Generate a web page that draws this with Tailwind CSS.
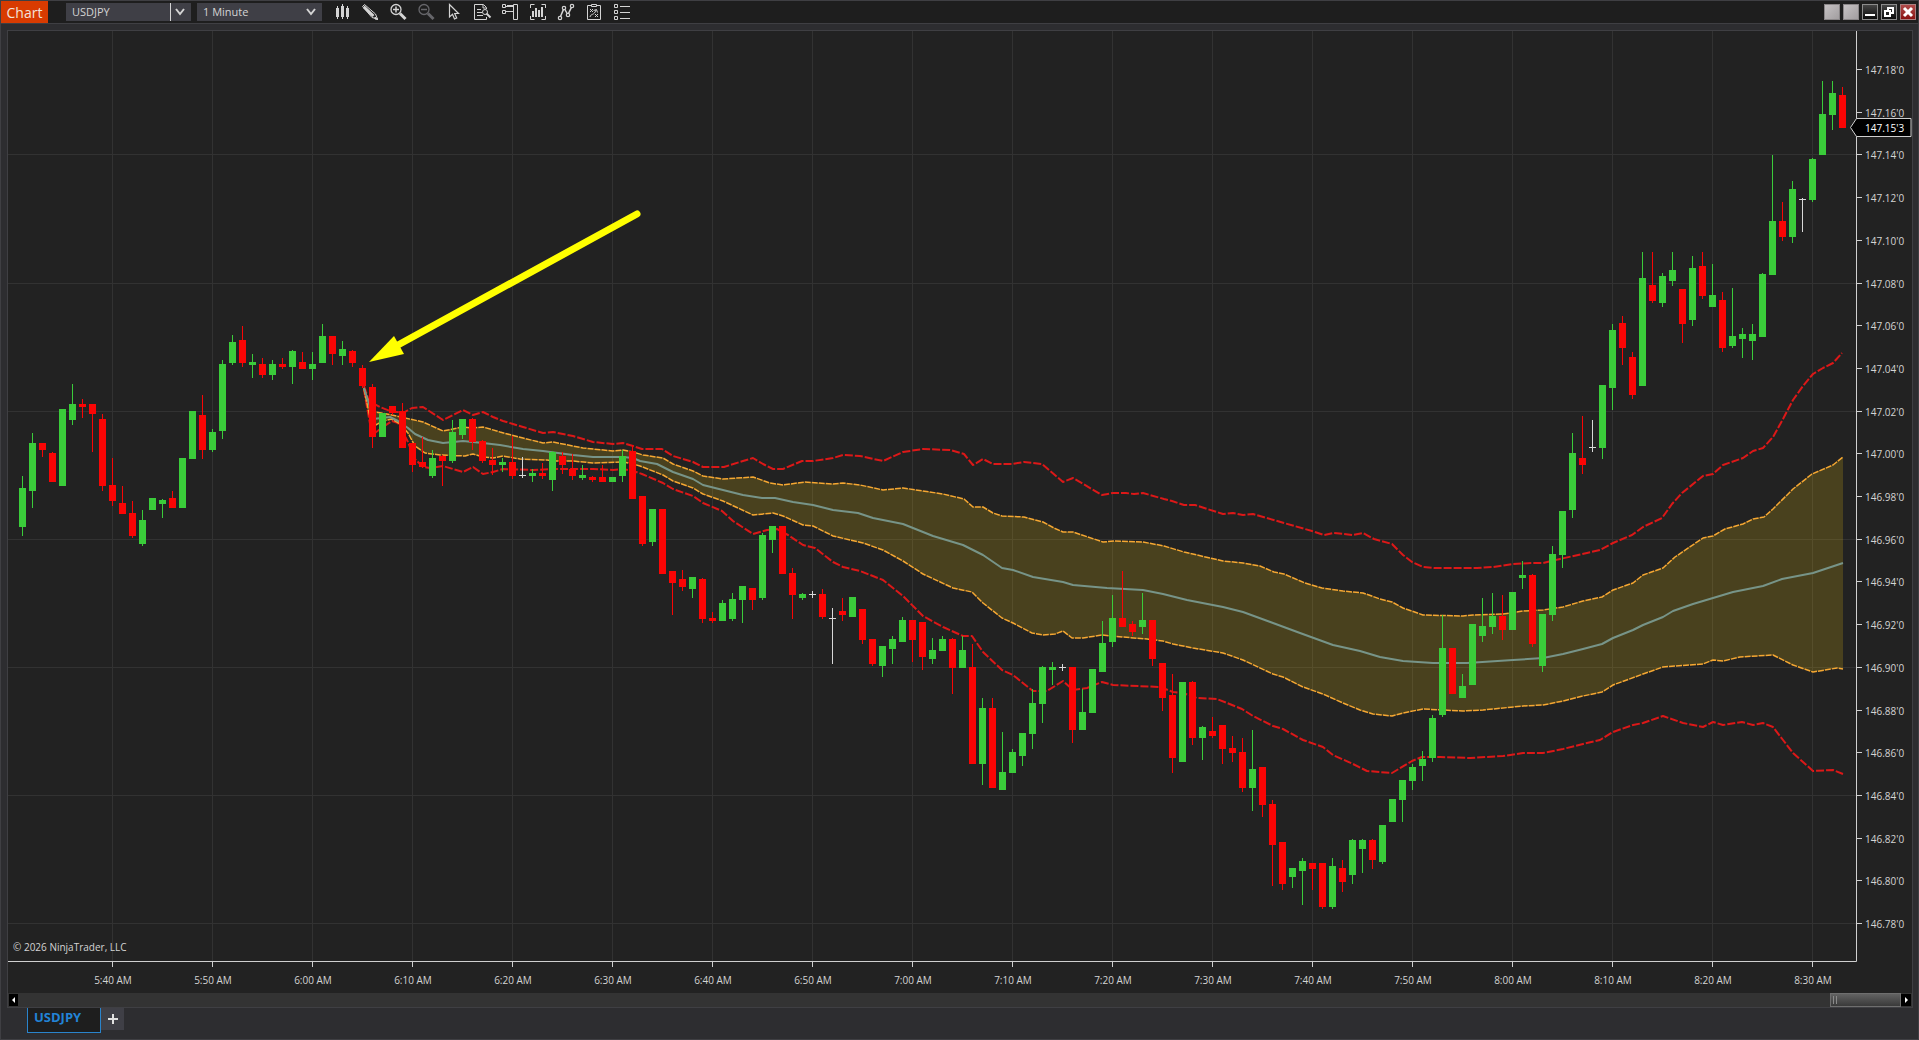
<!DOCTYPE html>
<html lang="en">

<head>
  <meta charset="UTF-8" />
  <meta name="viewport" content="width=device-width, initial-scale=1" />
  <title>Chart - USDJPY</title>
  <script src="https://cdn.jsdelivr.net/npm/@tailwindcss/browser@4"></script>
</head>

<body class="flex h-screen flex-col overflow-hidden border border-[#3f3f43] bg-[#2d2d30] font-['Open_Sans',sans-serif] text-[#d4d4d4]">

  <!-- Title bar -->
  <header class="flex h-[23px] shrink-0 items-center border-b border-[#3f3f43] bg-[#1e1e1e] pr-[2px]">
    <h1 class="flex h-full w-[47px] items-center justify-center bg-[#d83b01] text-[14px] text-[#f3e3dc]">Chart</h1>

    <div class="relative ml-[18px] h-[18px] w-[125px]">
      <select aria-label="Instrument" class="block h-full w-full appearance-none bg-[#3f3f46] pl-[6px] text-[11px] leading-[18px] outline-none">
        <option>USDJPY</option>
      </select>
      <svg class="pointer-events-none absolute right-0 top-0 h-[18px] w-[22px]" viewBox="0 0 22 18" fill="none" stroke="#d4d4d4">
        <path d="M1.5 0v18" />
        <path d="M7 6l4 5l4-5" stroke-width="2" />
      </svg>
    </div>

    <div class="relative ml-[6px] h-[18px] w-[125px]">
      <select aria-label="Interval" class="block h-full w-full appearance-none bg-[#3f3f46] pl-[6px] text-[11px] leading-[18px] outline-none">
        <option>1 Minute</option>
      </select>
      <svg class="pointer-events-none absolute right-0 top-0 h-[18px] w-[22px]" viewBox="0 0 22 18" fill="none" stroke="#d4d4d4">
        <path d="M7 6l4 5l4-5" stroke-width="2" />
      </svg>
    </div>

    <nav class="ml-[6px] flex" aria-label="Chart tools">
      <button class="h-5 w-7" aria-label="Bar type">
        <svg class="h-5 w-7" viewBox="0 0 28 20" fill="#d4d4d4">
          <path d="M8 6h3v9H8zM9 4h1v13H9zM13 4h3v11h-3zM14 2h1v15h-1zM18 6h3v9h-3zM19 4h1v13h-1z" />
        </svg>
      </button>
      <button class="h-5 w-7" aria-label="Drawing tools">
        <svg class="h-5 w-7" viewBox="0 0 28 20" fill="none" stroke="#d4d4d4">
          <path d="M6.500 4.500l2-2l11 9.500l2 5l-5.500-1.500z" />
          <path d="M8 4l10 9.500M7.500 5.500l9.500 9" stroke-width="1.500" />
          <path d="M19 15l3 2.500l-3-.5z" fill="#d4d4d4" />
        </svg>
      </button>
      <button class="h-5 w-7" aria-label="Zoom in">
        <svg class="h-5 w-7" viewBox="0 0 28 20" fill="none" stroke="#d4d4d4">
          <circle cx="12" cy="7.500" r="5" stroke-width="1.300" />
          <path d="M12 4.500v6M9 7.500h6" stroke-width="1.500" />
          <path d="M16 11.500l5.500 5.500" stroke-width="3" />
        </svg>
      </button>
      <button class="h-5 w-7" aria-label="Zoom out">
        <svg class="h-5 w-7" viewBox="0 0 28 20" fill="none" stroke="#66666a">
          <circle cx="12" cy="7.500" r="5" stroke-width="1.300" />
          <path d="M9 7.500h6" stroke-width="1.500" />
          <path d="M16 11.500l5.500 5.500" stroke-width="3" />
        </svg>
      </button>
      <button class="h-5 w-7" aria-label="Cursor">
        <svg class="h-5 w-7" viewBox="0 0 28 20" fill="none" stroke="#d4d4d4" stroke-width="1.200">
          <path d="M9.500 2.500v12.500l3-2.700l2 4.700l2.200-1l-2-4.500h3.800z" />
        </svg>
      </button>
      <button class="h-5 w-7" aria-label="Data box">
        <svg class="h-5 w-7" viewBox="0 0 28 20" fill="none" stroke="#d4d4d4">
          <path d="M18.500 7V5.500l-3-3h-9v15h12V15M15 3v3h3" />
          <path d="M9 7.500h4M9 10.500h5M9 13.500h6" />
          <circle cx="17" cy="10" r="2.500" />
          <path d="M18.500 11.500l4 4" stroke-width="2" />
        </svg>
      </button>
      <button class="h-5 w-7" aria-label="Chart trader">
        <svg class="h-5 w-7" viewBox="0 0 28 20" fill="none" stroke="#d4d4d4">
          <path d="M17.500 2.500h4v15h-4zM6.500 2.500h3v3h-3zM6.500 8.500h3v3h-3z" />
          <path d="M10 4.500h7M10 9.500h7M11 3.500h6" />
        </svg>
      </button>
      <button class="h-5 w-7" aria-label="Data series">
        <svg class="h-5 w-7" viewBox="0 0 28 20" fill="none" stroke="#d4d4d4">
          <path d="M6.500 6V2.500h4M17.500 2.500h4V6M21.500 14v3.500h-4M10.500 17.500h-4V14" />
          <path d="M9 9v6M12 6v9M15 8v7M18 5v10" stroke-width="2" />
        </svg>
      </button>
      <button class="h-5 w-7" aria-label="Indicators">
        <svg class="h-5 w-7" viewBox="0 0 28 20" fill="none" stroke="#d4d4d4" stroke-width="1.200">
          <circle cx="8" cy="16" r="1.700" />
          <circle cx="12" cy="6" r="1.700" />
          <circle cx="16" cy="13" r="1.700" />
          <circle cx="20" cy="4" r="1.700" />
          <path d="M8.600 14.300l2.800-6.700M12.900 7.500l2.200 4M16.600 11.300l2.700-5.700" stroke-width="1.500" />
        </svg>
      </button>
      <button class="h-5 w-7" aria-label="Strategies">
        <svg class="h-5 w-7" viewBox="0 0 28 20" fill="none" stroke="#d4d4d4">
          <path d="M11 3.500H7.500v14h13v-14H17M11.500 2.500h5v2h-5z" />
          <path d="M10 7l3 3M13 7l-3 3M15 12l3 3M18 12l-3 3M10 15c1-4 4-1 6-7M13.500 8.500l3-1l1 3" />
        </svg>
      </button>
      <button class="h-5 w-7" aria-label="Properties">
        <svg class="h-5 w-7" viewBox="0 0 28 20" fill="none" stroke="#d4d4d4">
          <path d="M6.500 2.500h3v3h-3zM6.500 8.500h3v3h-3zM6.500 14.500h3v3h-3zM12 4.500h10M12 10.500h10M12 16.500h10" />
        </svg>
      </button>
    </nav>

    <div class="ml-auto flex gap-[3px]">
      <button aria-label="Instrument link" class="size-4 border border-[#8a8688] bg-linear-to-br from-[#c6c2c4] to-[#a29ea0]"></button>
      <button aria-label="Interval link" class="size-4 border border-[#8a8688] bg-linear-to-br from-[#c6c2c4] to-[#a29ea0]"></button>
      <button aria-label="Minimize" class="size-4 border border-[#8c8c8c] bg-linear-to-b from-[#454545] to-[#0c0c0c]">
        <svg class="size-[14px]" viewBox="0 0 14 14" fill="#fff"><path d="M2 9h10v2H2z" /></svg>
      </button>
      <button aria-label="Restore" class="size-4 border border-[#8c8c8c] bg-linear-to-b from-[#454545] to-[#0c0c0c]">
        <svg class="size-[14px]" viewBox="0 0 14 14" fill="none" stroke="#fff" stroke-width="2"><path d="M3 6h5v5H3zM6 5V3h5v5H9" /></svg>
      </button>
      <button aria-label="Close" class="size-4 border border-[#a88080] bg-linear-to-b from-[#b04a4a] to-[#8a1010]">
        <svg class="size-[14px]" viewBox="0 0 14 14" fill="none" stroke="#fff" stroke-width="3"><path d="M3 3l8 8M11 3l-8 8" /></svg>
      </button>
    </div>
  </header>

  <!-- Chart panel -->
  <main class="ml-[6px] mr-[5px] mt-[6px] flex min-h-0 flex-1 flex-col border border-[#3f3f43] bg-[#222222]">
    <svg id="chart" class="min-h-0 w-full flex-1" viewBox="8 31 1904 962" role="img" aria-label="USDJPY 1 minute candlestick chart">
      <g id="grid" stroke="#323232"></g>
      <g id="bands" fill="none" stroke-linejoin="round"></g>
      <g id="candles"></g>
      <g id="axes" fill="none" stroke="#d0d0d0">
        <path d="M1856.500 31V961.500H8" />
      </g>
      <g id="labels" class="text-[10px]" fill="#d4d4d4"></g>
      <text x="13" y="951" class="text-[10px]" fill="#d4d4d4">© 2026 NinjaTrader, LLC</text>

      <!-- last price marker -->
      <path d="M1850.500 127.500L1856.500 118.500H1911V136.500H1856.500Z" fill="#000" stroke="#d0d0d0" />
      <text x="1865" y="132" class="text-[10px]" fill="#fff">147.15'3</text>

      <!-- arrow annotation -->
      <g fill="#ffff00" stroke="#ffff00">
        <path d="M637 214L398 345" stroke-width="7" stroke-linecap="round" />
        <path d="M369 362L394 336L404 354Z" stroke="none" />
      </g>
    </svg>

    <!-- Time scroll bar -->
    <div class="flex h-[14px] shrink-0 items-center bg-[#333333] px-px">
      <button aria-label="Scroll left" class="flex h-3 w-[9px] items-center justify-center bg-black">
        <svg class="h-[6px] w-[3px]" viewBox="0 0 3 6" fill="#fff"><path d="M3 0v6L0 3z" /></svg>
      </button>
      <div class="ml-auto flex h-[14px] w-[71px] items-center gap-[2px] border border-[#6e6e6e] bg-linear-to-b from-[#626262] to-[#3a3a3a] pl-[2px]">
        <span class="h-2 w-px bg-[#8a8a8a]"></span>
        <span class="h-2 w-px bg-[#8a8a8a]"></span>
      </div>
      <button aria-label="Scroll right" class="flex h-3 w-[10px] items-center justify-center bg-black">
        <svg class="h-[6px] w-[3px]" viewBox="0 0 3 6" fill="#fff"><path d="M0 0v6L3 3z" /></svg>
      </button>
    </div>
  </main>

  <!-- Tabs -->
  <footer class="flex h-[31px] shrink-0 items-start pl-[26px]">
    <button class="h-[25px] w-[74px] border border-t-0 border-[#2a84cc] bg-[#1e1e1e] pb-[7px] pl-[6px] text-left text-[13px] leading-[18px] font-bold text-[#2283d6]">USDJPY</button>
    <button aria-label="Add tab" class="flex h-[22px] w-[23px] items-center justify-center bg-[#3f3f46]">
      <svg class="size-[10px]" viewBox="0 0 10 10" fill="#e0e0e0"><path d="M4 0h2v4h4v2H6v4H4V6H0V4h4z" /></svg>
    </button>
  </footer>

  <script>
    const svgNS = "http://www.w3.org/2000/svg";

    function add(parentId, name, attrs, text) {
      const el = document.createElementNS(svgNS, name);
      for (const key in attrs) el.setAttribute(key, attrs[key]);
      if (text) el.textContent = text;
      document.getElementById(parentId).appendChild(el);
    }

    // One bar per minute: colour, high, body top, body bottom, low (chart units)
    // g = up, r = down, w = unchanged
    const bars = `g476,488,527,536 g433,443,491,508 r443,443,450,457 r452,453,482,482 g409,409,486,486 g384,404,420,425
      r399,404,407,418 r404,404,414,452 r414,419,486,491 r458,485,501,506 r486,503,514,514 r501,513,536,538 g510,520,544,546
      g498,498,510,510 g499,500,504,518 r491,498,508,508 g458,458,508,508 g411,411,459,459 r395,415,450,459 g429,432,450,452
      g360,364,431,439 g335,342,363,365 r326,340,363,367 g354,362,365,378 r358,364,375,378 g360,364,375,380 r358,364,367,369
      g350,351,367,384 r352,362,369,369 g352,364,369,380 g324,336,363,363 r336,336,354,365 g341,349,356,365 r350,351,363,367
      r365,368,386,388 r384,387,437,448 g413,413,437,437 r406,406,413,415 r403,411,448,448 r443,443,465,472 r437,462,467,468
      g450,458,476,478 r455,456,461,486 g420,432,461,463 g419,419,435,439 r418,419,442,450 r440,441,461,463 r448,460,465,475
      g458,462,465,472 r436,462,476,479 w457,475,476,478 g469,473,476,482 r463,473,476,479 g451,452,480,491 r452,456,465,474
      r454,469,476,480 g465,475,478,480 r476,477,480,482 r465,477,482,482 g477,477,482,482 g450,456,476,482 r445,451,499,499
      r496,496,544,546 g509,509,542,546 r509,509,574,574 r571,571,583,615 r570,579,587,591 g577,577,589,598 r578,579,619,623
      r612,618,621,623 g600,603,621,621 g593,599,619,621 g586,586,600,623 r588,588,600,610 g533,535,598,600 g526,526,540,553
      r526,526,574,574 r568,573,595,619 g593,594,598,600 w591,594,595,598 r589,594,617,619 w608,618,619,664 r598,611,615,621
      g597,597,617,617 r609,609,640,644 r639,639,664,666 g646,646,666,677 g636,639,649,664 g617,620,642,642 r620,620,640,662
      r622,622,657,670 g638,650,659,664 g636,639,651,651 r638,639,668,694 g636,650,668,668 r644,667,764,764 g698,708,764,785
      r698,708,788,788 g732,772,790,790 g749,752,773,773 g733,733,756,766 g689,703,734,749 g666,667,704,723 g662,667,670,685
      w664,667,668,671 r667,667,730,743 g689,712,730,730 g669,669,713,713 g621,643,672,672 g595,618,642,647 r571,618,627,627
      r621,624,632,636 g593,620,627,634 r620,620,659,666 r663,663,698,711 r674,695,758,773 g682,682,762,762 r681,682,738,745
      g726,727,738,760 r717,731,736,738 r725,725,749,764 r736,748,753,762 r738,752,788,792 g730,769,788,811 r767,767,805,817
      r800,804,845,886 r842,842,884,890 g868,868,877,888 g858,861,871,905 r863,863,869,890 r863,863,907,909 g858,866,907,909
      r860,868,882,892 g839,840,875,884 g839,840,849,873 r839,840,860,869 g825,825,862,864 g799,799,822,822 g780,780,800,822
      g764,767,781,790 g751,759,766,781 g715,718,758,762 g615,648,715,717 r648,648,694,694 g674,686,698,698 g624,624,685,685
      g598,626,636,642 g593,616,627,634 r595,616,630,640 g592,592,630,630 g561,575,578,589 r574,575,644,647 g614,614,666,672
      g546,554,615,621 g511,511,555,568 g433,453,510,518 r416,458,465,474 w420,447,448,452 g385,385,448,459 g324,330,388,410
      r316,323,348,365 r352,357,395,399 g252,278,386,386 r252,285,301,303 g273,276,303,307 g252,270,281,286 r289,289,324,343
      g256,268,320,326 r252,266,296,299 g264,295,307,307 r292,300,348,352 g288,336,346,348 g328,334,339,358 g324,334,341,360
      g273,274,337,337 g155,221,275,275 r202,221,237,241 g181,189,237,243 w198,199,200,232 g158,159,200,202 g81,114,155,155
      g81,93,115,130 r87,95,128,128`;
    const barColors = { g: "#3acc3a", r: "#fa0505", w: "#d8d8d8" };

    bars.split(/\s+/).forEach((bar, i) => {
      const fill = barColors[bar[0]];
      const [high, top, bottom, low] = bar.slice(1).split(",").map(Number);
      const x = 22 + i * 10;
      add("candles", "rect", { x, y: high, width: 1, height: low - high, fill });
      add("candles", "rect", { x: x - 3, y: top, width: 7, height: bottom - top, fill });
    });

    // Anchored VWAP and its deviation bands
    const upper2 = "364,386 369,401 380,407 390,411 403,413 412,408 423,407 443,420 463,410 473,415 483,412 493,417 503,421 513,424 523,427 543,433 553,432 573,436 593,442 613,444 623,443 633,446 642,449 662,449 673,456 693,462 703,467 724,467 743,461 753,458 763,464 773,469 783,469 802,461 813,461 833,458 843,455 860,456 883,461 903,452 923,449 950,450 964,454 973,465 983,459 993,464 1012,464 1024,462 1042,464 1063,482 1073,478 1102,495 1113,493 1126,493 1134,494 1143,493 1164,499 1172,501 1184,505 1195,505 1223,514 1233,513 1243,515 1253,514 1284,523 1312,531 1324,535 1334,533 1353,535 1363,533 1374,539 1392,544 1403,555 1412,562 1423,567 1435,568 1477,568 1493,567 1513,564 1533,563 1543,563 1560,559 1587,553 1600,550 1613,543 1632,535 1643,527 1662,518 1672,504 1682,493 1703,476 1713,474 1723,465 1743,458 1753,451 1763,448 1773,437 1783,419 1793,400 1803,386 1813,374 1823,368 1833,363 1842,353";
    const upper1 = "364,388 369,403 376,412 392,415 405,418 423,422 443,431 463,427 472,428 483,427 500,432 523,438 543,443 553,442 583,448 613,451 623,450 633,452 643,455 663,458 673,464 693,471 703,476 723,479 753,477 770,483 783,485 805,482 833,484 843,483 860,485 883,490 903,488 943,494 964,499 973,507 983,507 993,513 1002,516 1024,517 1043,522 1054,528 1063,532 1073,532 1103,542 1114,541 1143,542 1164,546 1184,552 1223,561 1243,563 1260,566 1274,572 1284,574 1305,583 1322,588 1343,591 1363,593 1380,599 1392,602 1403,608 1423,615 1463,616 1473,615 1503,614 1523,611 1543,610 1563,607 1583,601 1602,597 1613,590 1633,583 1643,575 1663,568 1675,557 1703,538 1713,536 1725,529 1743,524 1753,519 1764,517 1773,509 1793,489 1812,474 1833,465 1843,457";
    const vwap = "364,388 369,404 373,419 390,417 398,421 408,428 415,434 428,440 443,443 463,441 483,443 500,445 523,449 543,451 573,455 593,457 623,457 633,458 640,461 657,464 673,472 693,479 703,485 723,490 743,495 762,498 775,498 793,502 813,505 833,510 858,513 873,518 903,524 933,536 963,545 983,555 1002,568 1013,570 1033,577 1063,582 1073,585 1107,588 1143,590 1163,594 1187,600 1223,607 1243,612 1273,623 1300,633 1333,645 1360,651 1380,657 1403,661 1433,663 1467,663 1513,660 1543,658 1563,654 1583,649 1602,644 1613,638 1633,630 1643,625 1663,617 1673,611 1693,604 1713,598 1733,592 1763,586 1782,579 1813,573 1843,563";
    const lower1 = "364,389 372,427 383,421 392,419 400,424 408,433 415,446 425,453 440,455 465,456 473,454 483,457 493,458 503,456 520,459 547,460 553,461 573,461 593,463 623,462 633,464 640,466 663,475 673,481 693,488 703,494 723,501 753,515 773,513 783,516 803,525 813,526 833,536 863,543 883,550 903,561 923,574 953,588 972,592 983,603 1002,618 1013,623 1032,633 1043,635 1055,634 1063,631 1072,638 1083,638 1102,635 1122,637 1147,639 1163,641 1173,644 1193,648 1223,653 1243,660 1273,674 1283,677 1303,687 1323,694 1343,703 1360,710 1373,714 1392,716 1403,713 1423,709 1463,711 1483,710 1523,706 1543,705 1563,701 1583,696 1602,692 1613,685 1643,674 1663,667 1703,664 1713,660 1723,661 1740,657 1773,655 1793,665 1813,672 1837,668 1843,669";
    const lower2 = "364,390 372,435 383,427 392,421 398,423 408,442 414,458 423,467 430,468 443,466 463,472 473,467 483,474 493,472 503,469 533,470 553,469 593,469 613,470 623,469 633,471 642,474 663,483 673,489 693,496 703,503 722,511 733,521 753,534 767,530 777,529 788,535 803,545 815,548 833,562 843,567 860,571 883,580 903,596 923,616 943,627 963,636 972,636 983,652 1002,670 1013,675 1033,691 1047,691 1063,681 1073,690 1087,688 1102,682 1113,685 1160,687 1173,692 1183,693 1197,698 1217,699 1242,709 1253,716 1273,726 1283,729 1303,740 1323,747 1333,755 1353,764 1367,771 1392,773 1412,761 1422,757 1440,757 1470,758 1503,756 1523,753 1543,753 1563,749 1583,744 1600,740 1613,732 1633,725 1643,723 1663,716 1683,723 1703,727 1713,722 1723,725 1742,722 1753,725 1763,723 1773,727 1783,740 1793,753 1813,771 1833,770 1843,774";

    const cloud = upper1 + " " + lower1.split(" ").reverse().join(" ");
    add("bands", "polygon", { points: cloud, fill: "#e5bd0e", "fill-opacity": 0.2 });
    for (const points of [upper2, lower2]) {
      add("bands", "polyline", { points, stroke: "#dc1818", "stroke-width": 2, "stroke-dasharray": "8 2" });
    }
    for (const points of [upper1, lower1]) {
      add("bands", "polyline", { points, stroke: "#f5a732", "stroke-width": 1.5, "stroke-dasharray": "6 1" });
    }
    add("bands", "polyline", { points: vwap, stroke: "#779488", "stroke-width": 2 });

    // Price axis: 147.18'0 down to 146.78'0, a grid line on every third step
    for (let k = 0; k <= 20; k++) {
      const y = Math.floor(69.5 + 42.7 * k) + 0.5;
      add("axes", "path", { d: `M1857 ${y}h5` });
      add("labels", "text", { x: 1865, y: y + 4.5 }, (147.18 - k * 0.02).toFixed(2) + "'0");
      if (k % 3 === 2) add("grid", "path", { d: `M8 ${y}H1856` });
    }

    // Time axis: every ten minutes from 5:40 AM
    for (let k = 0; k < 18; k++) {
      const x = 112.5 + 100 * k;
      const minutes = 340 + 10 * k;
      const label = Math.floor(minutes / 60) + ":" + String(minutes % 60).padStart(2, "0") + " AM";
      add("grid", "path", { d: `M${x} 31V961` });
      add("axes", "path", { d: `M${x} 962v5` });
      add("labels", "text", { x: x + 0.5, y: 984, "text-anchor": "middle" }, label);
    }
  </script>
</body>

</html>
